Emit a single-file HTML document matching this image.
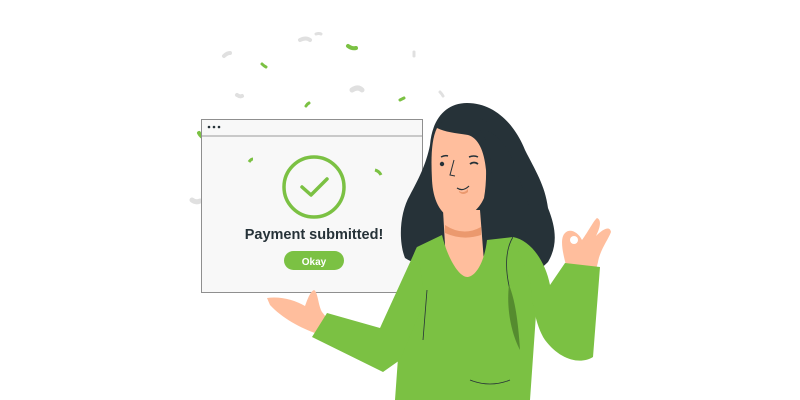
<!DOCTYPE html>
<html><head><style>
html,body{margin:0;padding:0;background:#fff;}
body{width:800px;height:400px;overflow:hidden;position:relative;font-family:"Liberation Sans",sans-serif;}
</style></head><body>
<svg width="800" height="400" viewBox="0 0 800 400" style="position:absolute;left:0;top:0">
<g fill="none" stroke-width="4" stroke-linecap="round">
<path d="M348 46 q4 3 8 2" stroke="#7bc143"/>
<path d="M300 40 q6-3 10 0" stroke="#e0e0e0"/>
<path d="M352 90 q6-4 10 0" stroke="#e0e0e0" stroke-width="5"/>
<path d="M224 56 q3-3 6-3" stroke="#e0e0e0"/>
<path d="M237 95 q3 2 5 1" stroke="#e0e0e0"/>
<path d="M262 64 q2 2 4 3" stroke="#7bc143" stroke-width="3"/>
<path d="M306 106 q1-2 3-3" stroke="#7bc143" stroke-width="3"/>
<path d="M400 100 q2-1 4-2" stroke="#7bc143" stroke-width="3"/>
<path d="M414 52 q0 2 0 4" stroke="#e0e0e0" stroke-width="3"/>
<path d="M440 92 q2 2 3 4" stroke="#e0e0e0" stroke-width="3"/>
<path d="M316 34 q3-1 5 0" stroke="#e0e0e0" stroke-width="3"/>
<path d="M199 133 q2 4 6 5" stroke="#7bc143"/>
<path d="M192 200 q4 3 8 1" stroke="#e0e0e0" stroke-width="5"/>
</g>
<rect x="201.5" y="119.5" width="221" height="173" fill="#f8f8f8" stroke="#8f8f8f"/>
<line x1="202" y1="136" x2="422" y2="136" stroke="#9a9a9a"/>
<circle cx="209" cy="127" r="1.3" fill="#263238"/><circle cx="214" cy="127" r="1.3" fill="#263238"/><circle cx="219" cy="127" r="1.3" fill="#263238"/>
<path d="M249 162 q2-3 4-3" stroke="#7bc143" stroke-width="3" fill="none"/>
<path d="M375 170 q4 1 6 5" stroke="#7bc143" stroke-width="3" fill="none"/>
<circle cx="314" cy="187" r="30" fill="none" stroke="#7bc143" stroke-width="3.5"/>
<path d="M302 187 l9 8 l16-16" fill="none" stroke="#7bc143" stroke-width="3.5" stroke-linecap="round" stroke-linejoin="round"/>
<text x="314" y="239" text-anchor="middle" font-family="Liberation Sans" font-weight="bold" font-size="14.5" fill="#263238">Payment submitted!</text>
<rect x="284" y="251" width="60" height="19" rx="9.5" fill="#7bc143"/>
<text x="314" y="265" text-anchor="middle" font-family="Liberation Sans" font-weight="bold" font-size="10" fill="#fff">Okay</text>
<!-- hair back -->
<path d="M467 103 C445 103 432 120 430 145 C426 165 418 180 410 195 C400 212 398 240 405 258 C420 268 435 262 445 252 L495 285 C515 288 535 275 548 262 C558 245 556 228 548 208 C545 185 535 170 525 150 C515 125 495 103 467 103 Z" fill="#263238"/>
<!-- neck -->
<path d="M443 210 L480 210 L484 262 L468 282 L446 262 Z" fill="#ffbe9d"/>
<path d="M445 225 q18 12 36 2 l0 8 q-18 6 -36 -2z" fill="#eb996e"/>
<!-- face -->
<path d="M437 128 C448 120 470 122 480 130 C486 150 488 175 484 198 C478 212 465 220 452 218 C440 214 433 200 432 180 C431 160 431 140 437 128 Z" fill="#ffbe9d"/>
<path d="M437 128 C445 112 480 112 490 125 C495 140 492 160 486 170 C484 150 478 138 468 135 C455 133 445 132 437 128Z" fill="#263238"/>
<circle cx="442" cy="164" r="2.2" fill="#263238"/>
<path d="M470 164 q4-3 8 0" stroke="#263238" stroke-width="1.8" fill="none"/>
<path d="M441 157 q4-2 7-1 M469 157 q5-2 9 0" stroke="#263238" stroke-width="1.5" fill="none"/>
<path d="M454 160 l-4 15 l5 1" stroke="#263238" stroke-width="1" fill="none"/>
<path d="M457 188 q6 4 12-2" stroke="#263238" stroke-width="1.2" fill="none"/>
<path d="M459 191 q5 3 9-2 l0 3 q-5 4-9 0z" fill="#eb996e"/>
<!-- hair right strands -->
<path d="M480 130 C495 150 488 170 495 190 C500 215 488 240 492 262 C494 275 492 282 488 284 L520 272 C530 255 520 240 528 225 C535 210 522 190 518 175 C512 155 500 130 480 130Z" fill="#263238"/>
<!-- left hand -->
<path d="M267 298 C280 296 295 300 305 306 C308 298 310 292 314 290 C318 292 318 305 322 312 L330 322 L318 334 C300 328 282 318 270 305 Z" fill="#ffbe9d"/>
<!-- right hand -->
<path d="M566 265 C562 250 560 238 565 233 C570 228 578 232 582 240 C588 232 594 220 597 218 C602 220 600 228 596 236 C604 228 610 226 611 232 C608 240 600 250 598 262 L596 270 Z" fill="#ffbe9d"/>
<circle cx="574" cy="240" r="4" fill="#fff"/>
<!-- body -->
<path d="M442 235 C448 260 460 278 468 277 C478 275 485 258 487 240 L513 237 C530 245 540 270 537 300 L530 400 L395 400 L400 330 C400 300 410 260 417 247 Z" fill="#7bc143"/>
<path d="M513 237 C505 250 505 270 510 290" stroke="#263238" stroke-width="0.8" fill="none"/>
<!-- left arm sleeve -->
<path d="M312 337 L327 313 L380 328 L417 247 L425 300 L400 360 L383 372 Z" fill="#7bc143"/>
<!-- right arm -->
<path d="M513 237 C530 240 545 260 550 285 L565 263 L600 267 L593 357 C580 365 560 360 545 340 C535 325 532 300 530 280 Z" fill="#7bc143"/>
<path d="M509 285 C515 300 518 320 520 350 C512 335 506 310 509 285Z" fill="#558b2f"/>
<path d="M427 290 l-4 50 M470 380 q20 8 40 0" stroke="#263238" stroke-width="0.8" fill="none"/>
</svg>
</body></html>
